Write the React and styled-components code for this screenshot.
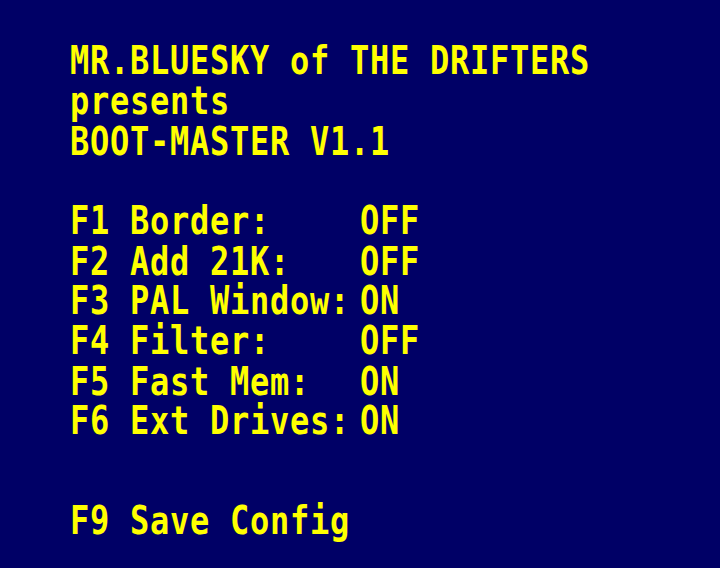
import React from "react";
import styled, { createGlobalStyle } from "styled-components";

const options = [
    { key: "F1", label: "Border:", value: "OFF" },
    { key: "F2", label: "Add 21K:", value: "OFF" },
    { key: "F3", label: "PAL Window:", value: "ON" },
    { key: "F4", label: "Filter:", value: "OFF" },
    { key: "F5", label: "Fast Mem:", value: "ON" },
    { key: "F6", label: "Ext Drives:", value: "ON" },
];

const App = () => {
    return(
        <Page>
            <GlobalStyle />
            <Screen>
                <Line>MR.BLUESKY of THE DRIFTERS</Line>
                <Line>presents</Line>
                <Line>BOOT-MASTER V1.1</Line>

                <OptionList>
                    {
                        options.map((o) => (
                            <Option key={o.key}>
                                <span>{o.key} {o.label}</span>
                                <span>{o.value}</span>
                            </Option>
                        ))
                    }
                </OptionList>

                <Footer>F9 Save Config</Footer>
            </Screen>
        </Page>
    )
}

const GlobalStyle = createGlobalStyle`
    html, body{
        margin: 0;
        padding: 0;
        background: #000066;
    }
`;

const Page = styled.div`
    width: 720px;
    height: 568px;
    overflow: hidden;
    box-sizing: border-box;
    padding: 42px 0 0 70px;
    background: #000066;
`;

// glyphs are tall and narrow on the old screen, so stretch the text vertically
const Screen = styled.div`
    transform: scaleY(1.2);
    transform-origin: top left;
    font-family: "DejaVu Sans Mono", "Liberation Mono", monospace;
    font-weight: bold;
    font-size: 32px;
    line-height: 33.333px;
    letter-spacing: 0.73px;
    color: #ffff00;
    white-space: pre;
`;

const Line = styled.div`
    height: 33.333px;
`;

const OptionList = styled.div`
    margin-top: 33.333px;
    display: flex;
    flex-direction: column;
`;

const Option = styled.div`
    display: grid;
    grid-template-columns: 290px auto;
    height: 33.333px;
`;

const Footer = styled(Line)`
    margin-top: 50px;
`;

export default App;
